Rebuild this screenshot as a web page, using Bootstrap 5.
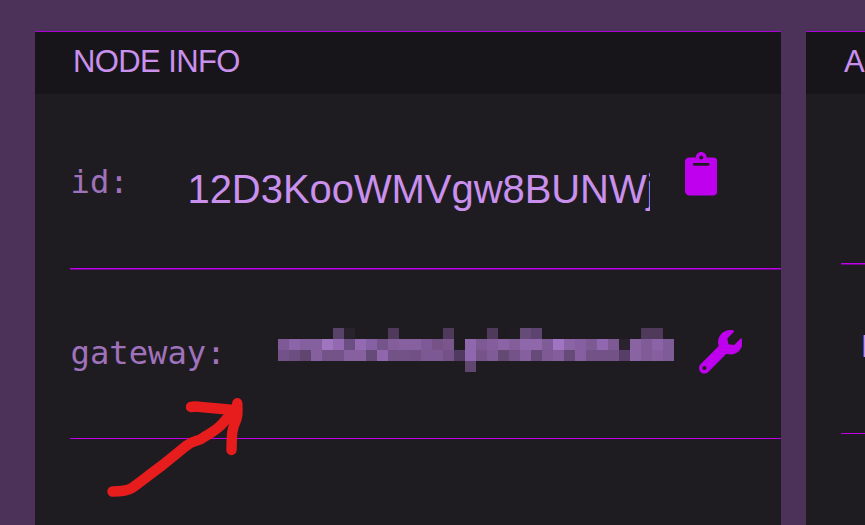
<!DOCTYPE html>
<html lang="en">
<head>
<meta charset="utf-8">
<meta name="viewport" content="width=device-width, initial-scale=1">
<title>Node info</title>
<link href="https://cdn.jsdelivr.net/npm/bootstrap@5.3.0/dist/css/bootstrap.min.css" rel="stylesheet">
<style>
body{background:#4c3159;font-family:"Liberation Sans",Arial,sans-serif;color:#c990ed;height:525px}
.board{padding:31px 0 0 35px;gap:25px;height:525px}
.panel{flex:0 0 746px;background:#1f1c21;border-top:1px solid #ae00d9}
.panel-head{height:62px;padding:0 38px;background:#18151a;font-size:31px;letter-spacing:-.6px;line-height:60px;white-space:nowrap}
.entry{margin-left:35px;border-bottom:1px solid #be00ec;white-space:nowrap}
.entry-id{height:175px}
.entry-gw{height:170px}
.side .entry-id{height:170px}
.soft-line{box-shadow:0 1px 0 #6e0b86}
.tag{font:32.2px/40px "DejaVu Sans Mono",monospace;color:#9f72bc;text-indent:.6px}
.entry-id .tag{width:117.5px;margin-top:68px}
.entry-gw .tag{width:208px;margin-top:64px}
.peer{width:462.5px;font-size:40px;letter-spacing:-.06px;line-height:48px;margin-top:71px}
.clip{width:32.5px;height:43.5px;margin:58.3px 0 0 34.7px;fill:#bf00ef}
.spanner{width:43.5px;height:43.5px;margin:61px 0 0 24.8px;fill:#bf00ef}
.mosaic{width:396px;height:44px;margin-top:59px}
.stat{font-size:32px;line-height:40px;margin:62px 0 0 20px}
.arrow{left:100px;top:390px;pointer-events:none}
</style>
<script src="https://cdn.jsdelivr.net/npm/bootstrap@5.3.0/dist/js/bootstrap.bundle.min.js"></script>
</head>
<body class="overflow-hidden position-relative">
<main class="board d-flex overflow-hidden">
  <section class="panel">
    <div class="panel-head">NODE INFO</div>
    <div class="entry entry-id soft-line d-flex align-items-start">
      <span class="tag flex-shrink-0">id:</span>
      <span class="peer overflow-hidden flex-shrink-0">12D3KooWMVgw8BUNWj</span>
      <svg class="clip flex-shrink-0" viewBox="0 0 384 512" aria-label="Copy"><path d="M384 112v352c0 26.51-21.49 48-48 48H48c-26.51 0-48-21.49-48-48V112c0-26.51 21.49-48 48-48h80c0-35.29 28.71-64 64-64s64 28.71 64 64h80c26.51 0 48 21.49 48 48zM192 40c-13.255 0-24 10.745-24 24s10.745 24 24 24 24-10.745 24-24-10.745-24-24-24m96 114v-20a6 6 0 0 0-6-6H102a6 6 0 0 0-6 6v20a6 6 0 0 0 6 6h180a6 6 0 0 0 6-6z"/></svg>
    </div>
    <div class="entry entry-gw d-flex align-items-start">
      <span class="tag flex-shrink-0">gateway:</span>
      <svg class="mosaic flex-shrink-0" id="mosaic" viewBox="0 0 36 4" shape-rendering="crispEdges" aria-label="Hidden address"></svg>
      <svg class="spanner flex-shrink-0" viewBox="0 0 512 512" aria-label="Edit"><path d="M507.73 109.1c-2.24-9.03-13.54-12.09-20.12-5.51l-74.36 74.36-67.88-11.31-11.31-67.88 74.36-74.36c6.62-6.62 3.43-17.9-5.66-20.16-47.38-11.74-99.55.91-136.58 37.93-39.64 39.64-50.55 97.1-34.05 147.2L18.74 402.76c-24.99 24.99-24.99 65.51 0 90.5 24.99 24.99 65.51 24.99 90.5 0l213.21-213.21c50.12 16.71 107.47 5.68 147.37-34.22 37.07-37.07 49.7-89.32 37.91-136.73zM64 472c-13.25 0-24-10.75-24-24 0-13.26 10.75-24 24-24s24 10.75 24 24c0 13.25-10.75 24-24 24z"/></svg>
    </div>
  </section>
  <section class="panel side">
    <div class="panel-head">A</div>
    <div class="entry entry-id soft-line"></div>
    <div class="entry entry-gw d-flex align-items-start"><span class="stat">P</span></div>
  </section>
</main>
<svg class="arrow position-absolute" width="150" height="115" fill="none" stroke="#e71d1d" stroke-width="10.4" stroke-linecap="round" stroke-linejoin="round" aria-hidden="true">
  <path d="M12.500 101.500C21 101.500 27 101 32 98C38 94 49 85 62 75.500L86 56C94 49 97 53 105 46.500C114 41 118 39 123 33L134 20M91 17L95 16.500L134 20M137.300 13.300C137.600 22 138 27 134.500 34C131 42 132 48 131.500 60"/>
</svg>
<script>
// Colour rows of the pixelated address; "-" is an empty cell.
const rows = [
 "- - - - - 5a4369 27222b - - - 503a5c - - - - 503a5c - - - 503a5c - 201d22 654b78 5d446f - - - - - - - - - 503a5c 503a5c -",
 "7d5a96 8b65a8 85609f 85609f 9f75c0 9369b2 6c4f82 9369b2 8660a4 745489 835e9b 87609f 87609f 7d5a97 755388 7a568d - 8f67ae 7d5a94 845e9c 8b64a6 835e9b 8f67ab 8f67ab 7f5c98 a074c2 8b64a5 855f9f 7d5a94 9168af 7d5a94 2b2230 8a63a3 7f5b97 8a64a6 7f5b97",
 "735289 6c4e80 60466f 865f9e 745388 745388 87609f 87609f 654b77 9067ac 735287 735287 705085 7c5993 7c5993 735287 513a60 8f67ae 755489 7f5b98 644973 745488 865f9e 664b78 7d5a94 845e9c 664b78 855f9f 735285 735287 735287 563e66 8a63a3 7f5b97 855f9e 7f5b97",
 "- - - - - - - - - - - - - - - - - 60476f"
];
document.getElementById("mosaic").innerHTML = rows.map((r, y) => r.split(" ").map((c, x) =>
  c === "-" ? "" : `<rect x="${x}" y="${y}" width="1" height="1" fill="#${c}"/>`).join("")).join("");
</script>
</body>
</html>
